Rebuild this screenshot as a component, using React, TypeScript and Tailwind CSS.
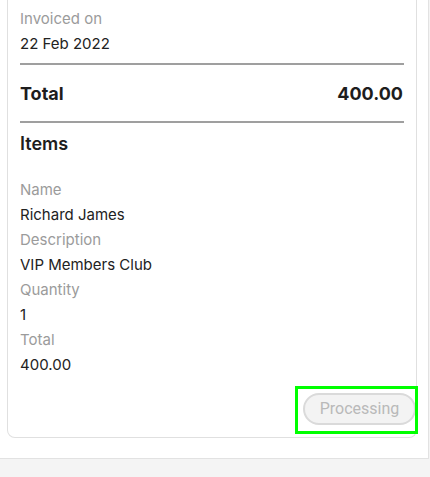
const rows = [
  { label: "Name", value: "Richard James" },
  { label: "Description", value: "VIP Members Club" },
  { label: "Quantity", value: "1" },
  { label: "Total", value: "400.00" },
];

export default function App() {
  return (
    <div className="w-[430px] h-[477px] bg-[#f4f4f4] font-['Inter',sans-serif] overflow-hidden">
      <div className="w-[429px] h-[459px] bg-white border-r border-b border-[#e2e2e2] pl-[7px] pr-[12px]">
        <div className="relative w-[410px] h-[438px] border-x border-b border-[#e0e0e0] rounded-b-lg px-3 flex flex-col">
          <div className="pt-[6px] text-[15px] leading-[25px]">
            <div className="text-[#9b9b9b]">Invoiced on</div>
            <div className="text-[#222]">22 Feb 2022</div>
          </div>
          <div className="mt-[7px] h-[2px] bg-[#9f9f9f]" />
          <div className="flex justify-between items-center h-[56px] text-[18px] font-bold text-[#1d1d1d]">
            <span>Total</span>
            <span className="mr-[1px]">400.00</span>
          </div>
          <div className="h-[2px] bg-[#9f9f9f]" />
          <div className="pt-[9px] text-[18px] font-semibold text-[#1d1d1d] leading-[24px]">Items</div>
          <div className="mt-[21px] text-[15px] leading-[25px]">
            {rows.map((r) => (
              <div key={r.label}>
                <div className="text-[#9b9b9b]">{r.label}</div>
                <div className="text-[#222]">{r.value}</div>
              </div>
            ))}
          </div>
          <div className="mt-[16px] -mr-3 flex justify-end">
            <button className="relative w-[113px] h-[32px] rounded-full bg-[#f3f3f3] border-2 border-[#dadada] text-[16px] text-[#b9b9b9] font-['Roboto',sans-serif]">
              Processing
              <span className="absolute left-[-10px] top-[-9px] w-[123px] h-[48px] border-[3px] border-[#00ff00]" />
            </button>
          </div>
        </div>
      </div>
    </div>
  );
}
